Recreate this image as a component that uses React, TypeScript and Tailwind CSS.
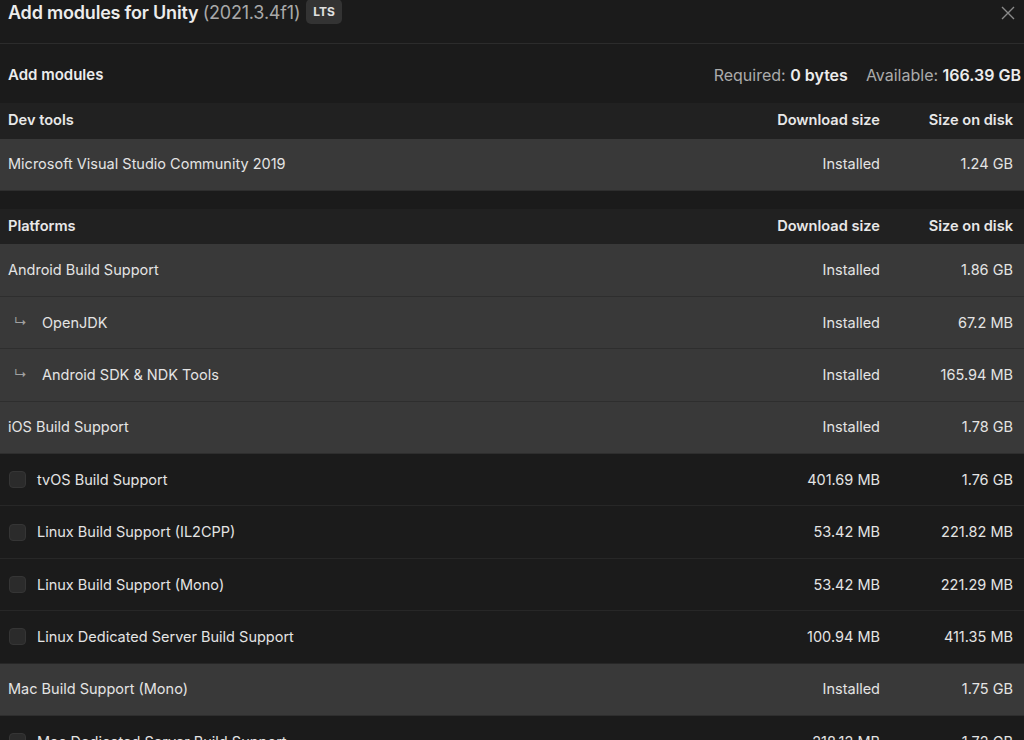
import React from 'react';

type Row = {
  name: string;
  download: string;
  disk: string;
  installed?: boolean;
  child?: boolean;
};

const devTools: Row[] = [
  { name: 'Microsoft Visual Studio Community 2019', download: 'Installed', disk: '1.24 GB', installed: true },
];

const platforms: Row[] = [
  { name: 'Android Build Support', download: 'Installed', disk: '1.86 GB', installed: true },
  { name: 'OpenJDK', download: 'Installed', disk: '67.2 MB', installed: true, child: true },
  { name: 'Android SDK & NDK Tools', download: 'Installed', disk: '165.94 MB', installed: true, child: true },
  { name: 'iOS Build Support', download: 'Installed', disk: '1.78 GB', installed: true },
  { name: 'tvOS Build Support', download: '401.69 MB', disk: '1.76 GB' },
  { name: 'Linux Build Support (IL2CPP)', download: '53.42 MB', disk: '221.82 MB' },
  { name: 'Linux Build Support (Mono)', download: '53.42 MB', disk: '221.29 MB' },
  { name: 'Linux Dedicated Server Build Support', download: '100.94 MB', disk: '411.35 MB' },
  { name: 'Mac Build Support (Mono)', download: 'Installed', disk: '1.75 GB', installed: true },
  { name: 'Mac Dedicated Server Build Support', download: '218.12 MB', disk: '1.72 GB' },
];

const SectionHeader: React.FC<{ title: string }> = ({ title }) => (
  <div className="grid grid-cols-[1fr_140px_133px] items-center h-[35.5px] bg-[#212121] pl-2 pr-[11px] text-[14.6px] font-semibold text-[#e8e8e8]">
    <span>{title}</span>
    <span className="text-right">Download size</span>
    <span className="text-right">Size on disk</span>
  </div>
);

const ModuleRow: React.FC<{ row: Row }> = ({ row }) => (
  <div
    className={
      row.installed
        ? 'grid grid-cols-[1fr_140px_133px] items-center h-[52.4px] bg-[#393939] border-b border-[#2e2e2e] pl-2 pr-[11px] text-[14.5px] text-[#e4e4e4]'
        : 'grid grid-cols-[1fr_140px_133px] items-center h-[52.4px] bg-[#1b1b1b] border-b border-[#272727] pl-2 pr-[11px] text-[14.5px] text-[#e4e4e4]'
    }
  >
    <div className="flex items-center">
      {row.child && <span className="w-[34px] pl-[6px] text-[#a0a0a0] text-[13px]">↳</span>}
      {!row.installed && (
        <span className="w-[17px] h-[17px] ml-px mr-[11px] rounded-[4px] bg-[#2b2b2b] border border-[#353535]" />
      )}
      <span>{row.name}</span>
    </div>
    <span className="text-right">{row.download}</span>
    <span className="text-right">{row.disk}</span>
  </div>
);

const App: React.FC = () => {
  return (
    <div
      className="w-[1024px] h-[740px] overflow-hidden bg-[#1b1b1b] text-[#e6e6e6]"
      style={{ fontFamily: 'Inter, "Noto Sans", sans-serif' }}
    >
      <div className="flex items-start justify-between h-[44px] border-b border-[#2c2c2c] pl-2 pr-[9px]">
        <div className="flex items-start gap-[6px]">
          <h1 className="text-[18px] leading-[26px] font-semibold text-[#ececec] tracking-[-0.2px]">
            Add modules for Unity <span className="font-normal text-[#a9a9a9]">(2021.3.4f1)</span>
          </h1>
          <span className="h-[25px] px-[7px] flex items-center rounded-[5px] bg-[#333333] text-[12px] font-bold text-[#e0e0e0] -mt-[1px]">
            LTS
          </span>
        </div>
        <svg width="14" height="14" viewBox="0 0 14 14" className="mt-[6px]">
          <path d="M1 1 L13 13 M13 1 L1 13" stroke="#8a8a8a" strokeWidth="1.4" />
        </svg>
      </div>

      <div className="flex items-center justify-between h-[59px] pt-[3px] pl-2 pr-[3px]">
        <span className="text-[15px] font-semibold text-[#ececec]">Add modules</span>
        <div className="flex items-center gap-[18px] text-[16px]">
          <span className="text-[#ababab]">
            Required: <span className="font-semibold text-[#ececec]">0 bytes</span>
          </span>
          <span className="text-[#ababab]">
            Available: <span className="font-semibold text-[#ececec]">166.39 GB</span>
          </span>
        </div>
      </div>

      <SectionHeader title="Dev tools" />
      {devTools.map((r) => (
        <ModuleRow key={r.name} row={r} />
      ))}

      <div className="h-[18px]" />

      <SectionHeader title="Platforms" />
      {platforms.map((r) => (
        <ModuleRow key={r.name} row={r} />
      ))}
    </div>
  );
};

export default App;
